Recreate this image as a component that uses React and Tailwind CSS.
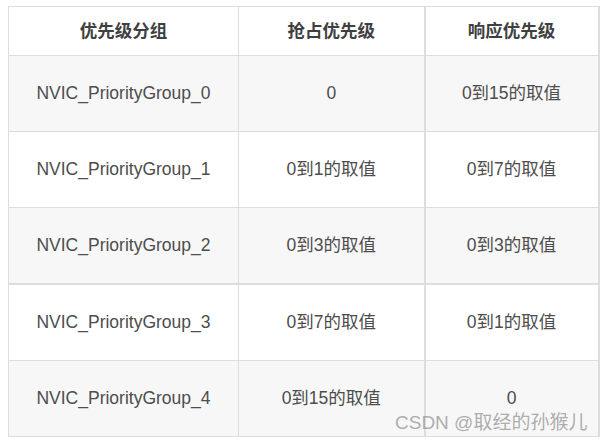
const rows = [
  ['NVIC_PriorityGroup_0', '0', '0到15的取值'],
  ['NVIC_PriorityGroup_1', '0到1的取值', '0到7的取值'],
  ['NVIC_PriorityGroup_2', '0到3的取值', '0到3的取值'],
  ['NVIC_PriorityGroup_3', '0到7的取值', '0到1的取值'],
  ['NVIC_PriorityGroup_4', '0到15的取值', '0'],
];

export default function App() {
  return (
    <div
      className="relative w-[601px] h-[441px] bg-white pt-[6px] pl-[8px]"
      style={{ fontFamily: '"Liberation Sans", Arial, "Noto Sans CJK SC", sans-serif' }}
    >
      <table className="table-fixed border-collapse text-[17.5px] text-[#4d4d4d]">
        <colgroup>
          <col className="w-[230px]" />
          <col className="w-[186px]" />
          <col className="w-[174px]" />
        </colgroup>
        <thead>
          <tr className="h-[49px] bg-white">
            <th className="border border-[#dddddd] font-bold text-[#3f3f3f]">优先级分组</th>
            <th className="border border-[#dddddd] font-bold text-[#3f3f3f]">抢占优先级</th>
            <th className="border border-[#dddddd] border-l-2 border-r-2 font-bold text-[#3f3f3f]">响应优先级</th>
          </tr>
        </thead>
        <tbody>
          {rows.map((r, i) => (
            <tr
              key={r[0]}
              className={`${i === 3 ? 'h-[77px] border-t-2 border-[#dddddd]' : 'h-[76px]'} ${i % 2 === 0 ? 'bg-[#f7f7f7]' : 'bg-white'}`}
            >
              <td className="border border-[#dddddd] text-center">{r[0]}</td>
              <td className="border border-[#dddddd] text-center">{r[1]}</td>
              <td className="border border-[#dddddd] border-l-2 border-r-2 text-center">{r[2]}</td>
            </tr>
          ))}
        </tbody>
      </table>
      <div className="absolute left-[395px] top-[409px] text-[19px] text-[#999999]/80 whitespace-nowrap">
        CSDN @取经的孙猴儿
      </div>
    </div>
  );
}
